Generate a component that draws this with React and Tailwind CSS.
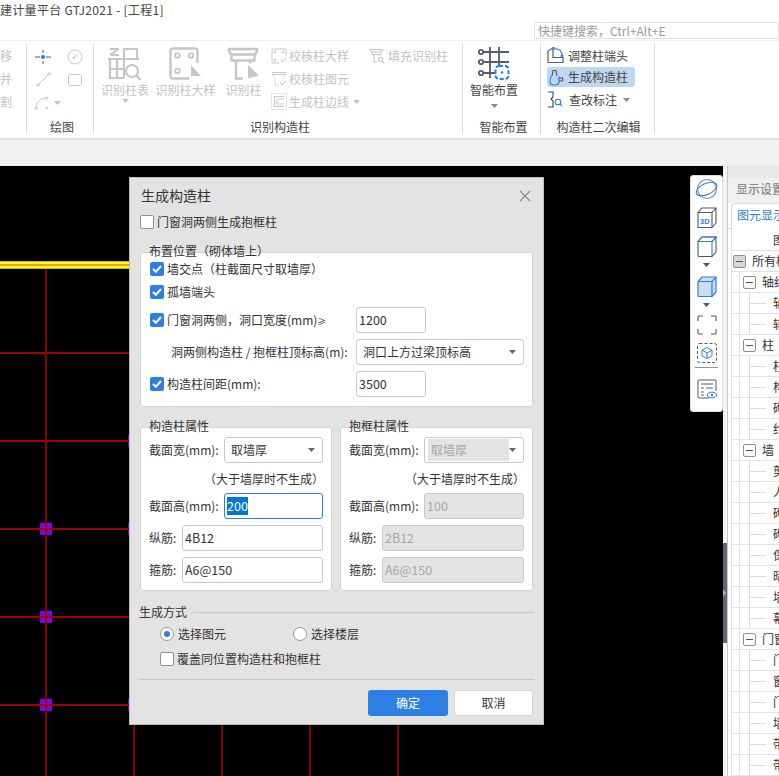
import React from "react";

const G = "#c6c6c6";

function Tri({ c = "#8a8a8a" }) {
  return (
    <svg width="7" height="4" viewBox="0 0 7 4" className="shrink-0">
      <path d="M0 0h7L3.5 4z" fill={c} />
    </svg>
  );
}

function IconTable() {
  return (
    <svg width="34" height="34" viewBox="0 0 34 34" fill="none" stroke={G} strokeWidth="2.2">
      <path d="M2 2h9M2 7.500l8-5M3 8h8" strokeWidth="1.800" />
      <path d="M0 12h31M16 1v30M16 2h13v10M2 12v19h14M9 12v19M2 22h14" />
      <circle cx="24" cy="24" r="6" />
      <path d="M28.500 28.500l4 4.500" />
    </svg>
  );
}
function IconDetail() {
  return (
    <svg width="33" height="34" viewBox="0 0 33 34" fill="none" stroke={G} strokeWidth="2.4">
      <path d="M20 31.500H4a2.500 2.500 0 0 1-2.500-2.500V4A2.500 2.500 0 0 1 4 1.500h22A2.500 2.500 0 0 1 28.500 4v12" />
      <circle cx="8.500" cy="8.500" r="2.300" strokeWidth="1.800" />
      <circle cx="22" cy="8.500" r="2.300" strokeWidth="1.800" />
      <circle cx="8.500" cy="24" r="2.300" strokeWidth="1.800" />
      <path d="M22 18l10 11H22z" fill={G} stroke="none" />
    </svg>
  );
}
function IconColumn() {
  return (
    <svg width="33" height="34" viewBox="0 0 33 34" fill="none" stroke={G} strokeWidth="2.4">
      <path d="M1 2h30M1 2l3 5.500h24L31 2M4.500 7.500v6h23v-6" />
      <path d="M9 13.500V31.500h7M23 13.500v3" />
      <path d="M21 18l11 10.500-11 3z" fill={G} stroke="none" />
    </svg>
  );
}
function IconSmallCheck() {
  return (
    <svg width="16" height="16" viewBox="0 0 16 16" fill="none" stroke={G} strokeWidth="1">
      <path d="M8 15H2a1 1 0 0 1-1-1V2a1 1 0 0 1 1-1h12a1 1 0 0 1 1 1v7" />
      <circle cx="4" cy="4" r="1" />
      <circle cx="12" cy="4" r="1" />
      <circle cx="4" cy="12" r="1" />
      <path d="M10 12l2 2 3-4" />
    </svg>
  );
}
function IconSmallTrap() {
  return (
    <svg width="16" height="16" viewBox="0 0 16 16" fill="none" stroke={G} strokeWidth="1">
      <path d="M1 1.500h14M1 3.500h14" />
      <path d="M2 4l2 4v6h4M14 4l-2 4" strokeDasharray="1.500 1" />
      <path d="M9 11l2 3 4-4" />
    </svg>
  );
}
function IconSmallEdge() {
  return (
    <svg width="16" height="17" viewBox="0 0 16 17" fill="none" stroke={G} strokeWidth="1">
      <rect x="0.500" y="0.500" width="15" height="16" strokeDasharray="1 1" />
      <path d="M3.500 3.500h10M3.500 3.500v10h10M6 6h7M6 6v5h7" />
    </svg>
  );
}
function IconSmallFill() {
  return (
    <svg width="16" height="16" viewBox="0 0 16 16" fill="none" stroke={G} strokeWidth="1.100">
      <path d="M1 1.500h13l-1.500 2.500h-10zM3 4v2.500h9V4M5 6.500V14h3M10 6.500V8" />
      <circle cx="11.500" cy="11.500" r="2.200" />
      <path d="M13 13l2 2" />
    </svg>
  );
}
function IconGrid() {
  return (
    <svg width="33" height="33" viewBox="0 0 33 33" fill="none">
      <g stroke="#555d68" strokeWidth="1.800">
        <path d="M5 5h26M5 15h26M5 26h13M12 0v31M21 0v22" />
        <circle cx="3" cy="5" r="2.200" fill="#fff" />
        <circle cx="3" cy="15" r="2.200" fill="#fff" />
        <circle cx="3" cy="26" r="2.200" fill="#fff" />
      </g>
      <rect x="17.500" y="19" width="13" height="13" rx="3.500" fill="#fff" stroke="#1f7fe8" strokeWidth="2" strokeDasharray="4 2" />
      <circle cx="24" cy="25.500" r="1.200" fill="#1f7fe8" />
    </svg>
  );
}
function IconAdjust() {
  return (
    <svg width="17" height="17" viewBox="0 0 17 17" fill="none" stroke="#555d68" strokeWidth="1.200">
      <path d="M1 15.500V4l5-3v9.500h10v5z" />
      <path d="M6 1l7 2 2.500 5" stroke="#2e7fe3" />
      <circle cx="6.500" cy="1.500" r="1" fill="#fff" stroke="#2e7fe3" />
      <circle cx="15" cy="9" r="1" fill="#fff" stroke="#2e7fe3" />
    </svg>
  );
}
function IconGen() {
  return (
    <svg width="15" height="17" viewBox="0 0 15 17" fill="none" stroke="#555d68" strokeWidth="1.200">
      <path d="M3 7l1-5.500h3L8 7" />
      <path d="M2.500 7C1 9 1 9.500 1 13c0 2 1.500 3 4.500 3S10 15 10 13V7.500" stroke="#1f7fe8" />
      <path d="M10 9h3.500v3H10" stroke="#555d68" />
    </svg>
  );
}
function IconAnn() {
  return (
    <svg width="16" height="17" viewBox="0 0 16 17" fill="none" stroke="#3e4650" strokeWidth="1.100">
      <path d="M1 1h5v5L4 8l2 2v6H1" />
      <circle cx="11" cy="11" r="2.800" stroke="#2e7fe3" />
      <path d="M13 13l2 2" stroke="#2e7fe3" />
    </svg>
  );
}

function Small({ icon, text, gap = "gap-[2px]", cls = "text-[#c2c2c2]", extra }) {
  return (
    <div className={`h-[23px] flex items-center ${gap} ${cls} whitespace-nowrap`}>
      {icon}
      <span>{text}</span>
      {extra}
    </div>
  );
}

function BigTool({ w, icon, text, arrow }) {
  return (
    <div className={`${w} flex flex-col items-center text-[#c2c2c2] whitespace-nowrap pt-[4px]`}>
      <div className="h-[34px]">{icon}</div>
      <div className="leading-[18px]">{text}</div>
      {arrow && <div className="flex"><Tri c="#c2c2c2" /></div>}
    </div>
  );
}

function Group({ w, label, children, cls = "", labelCls = "" }) {
  return (
    <div className={`${w} h-[91px] shrink-0 border-r border-[#dcdcdc] flex flex-col`}>
      <div className={`h-[76px] flex ${cls}`}>{children}</div>
      <div className={`h-[15px] leading-[15px] text-center text-[#444] whitespace-nowrap ${labelCls}`}>{label}</div>
    </div>
  );
}

function Ribbon() {
  return (
    <div className="h-[99px] shrink-0 flex pt-[2px] border-b-2 border-[#e2e2e2] bg-white text-[12px]">
      <Group w="w-[27px]" label="" cls="flex-col pt-[1px] text-[#c2c2c2]">
        <div className="h-[23px] leading-[23px]">移</div>
        <div className="h-[23px] leading-[23px]">并</div>
        <div className="h-[23px] leading-[23px]">割</div>
      </Group>
      <Group w="w-[67px]" label="绘图" cls="pt-[2px]" labelCls="pl-[4px]">
        <div className="grid grid-cols-[32px_32px] grid-rows-[23px_23px_23px] items-center justify-items-center">
          <svg width="16" height="14" viewBox="0 0 16 14" fill="none" stroke="#4f5864" strokeWidth="1">
            <path d="M0 7h5M11 7h5M8 0v3M8 11v3" />
            <circle cx="8" cy="7" r="2" fill="#1f7fe8" stroke="none" />
          </svg>
          <svg width="16" height="16" viewBox="0 0 16 16" fill="none" stroke={G} strokeWidth="1">
            <circle cx="8" cy="8" r="7" />
            <path d="M7 9l3.500-4" />
            <circle cx="7" cy="9" r="0.800" />
          </svg>
          <svg width="15" height="15" viewBox="0 0 15 15" fill="none" stroke={G} strokeWidth="1">
            <path d="M2.500 12.500l10-10" />
            <circle cx="2" cy="13" r="1.200" />
            <circle cx="13" cy="2" r="1.200" />
          </svg>
          <svg width="14" height="12" viewBox="0 0 14 12" fill="none" stroke={G} strokeWidth="1">
            <rect x="0.500" y="0.500" width="13" height="11" rx="1" />
          </svg>
          <div className="w-[32px] flex items-center gap-[4px] pl-[8px]">
            <svg width="15" height="14" viewBox="0 0 15 14" fill="none" stroke={G} strokeWidth="1" className="shrink-0">
              <path d="M1 13C1 6 5 2 11 2" />
              <circle cx="1.500" cy="12.500" r="1" />
              <circle cx="12" cy="2" r="1" />
              <circle cx="12" cy="12" r="1" />
            </svg>
            <Tri c="#c2c2c2" />
          </div>
        </div>
      </Group>
      <Group w="w-[369px]" label="识别构造柱" cls="pl-[1px]" labelCls="pl-[4px]">
        <BigTool w="w-[60px]" icon={<IconTable />} text="识别柱表" arrow />
        <BigTool w="w-[61px]" icon={<IconDetail />} text="识别柱大样" />
        <BigTool w="w-[55px]" icon={<IconColumn />} text="识别柱" />
        <div className="w-[98px] flex flex-col pt-[1px]">
          <Small icon={<IconSmallCheck />} text="校核柱大样" />
          <Small icon={<IconSmallTrap />} text="校核柱图元" />
          <Small icon={<IconSmallEdge />} text="生成柱边线" extra={<span className="ml-[2px] flex"><Tri c="#c2c2c2" /></span>} />
        </div>
        <div className="flex flex-col pt-[1px]">
          <Small icon={<IconSmallFill />} text="填充识别柱" gap="gap-[3px]" />
        </div>
      </Group>
      <Group w="w-[78px]" label="智能布置" cls="pl-[7px]" labelCls="pl-[4px]">
        <div className="w-[48px] flex flex-col items-center text-[#444] whitespace-nowrap pt-[4px]">
          <IconGrid />
          <div className="mt-[1px] leading-[18px]">智能布置</div>
          <div className="mt-[5px] flex"><Tri /></div>
        </div>
      </Group>
      <Group w="w-[114px]" label="构造柱二次编辑" cls="flex-col pl-[6px] pt-[1px]" labelCls="pl-[2px]">
        <Small icon={<IconAdjust />} text="调整柱端头" cls="text-[#444]" gap="gap-[4px]" />
        <div className="w-[88px] h-[20px] rounded-[3px] bg-[#bfd7f0] flex items-center gap-[4px] pl-[2px] text-[#444] whitespace-nowrap">
          <IconGen />
          <span>生成构造柱</span>
        </div>
        <div className="mt-[1px]">
          <Small icon={<IconAnn />} text="查改标注" cls="text-[#444]" gap="gap-[6px]" extra={<span className="flex"><Tri /></span>} />
        </div>
      </Group>
    </div>
  );
}

function CadDrawing() {
  const hs = [353, 441, 529, 617, 705].map((y) => y - 166);
  const vs = [46, 134, 222, 310, 398];
  const squares = [
    [46, 529], [46, 617], [46, 705], [134, 441], [134, 529], [134, 705],
  ];
  return (
    <svg className="absolute inset-0" width="723" height="610" viewBox="0 0 723 610">
      {squares.map(([x, y]) => (
        <rect key={`${x}-${y}`} x={x - 6} y={y - 166 - 6} width="12" height="12" fill="#7f00f5" />
      ))}
      {hs.map((y) => (
        <rect key={y} x="0" y={y - 1} width="400" height="2" fill="#a00000" />
      ))}
      {vs.map((x) => (
        <rect key={x} x={x - 1} y="99" width="2" height="511" fill="#880000" />
      ))}
      <rect x="0" y="95" width="400" height="8" fill="#b8b81a" />
      <rect x="0" y="96" width="400" height="6" fill="#ffff20" />
      <rect x="0" y="98" width="400" height="2" fill="#ff9a1a" />
    </svg>
  );
}

function FloatBar() {
  const s = "#4d5a6b";
  const b = "#2e7fe3";
  return (
    <div className="absolute left-[690px] top-[9px] w-[33px] h-[237px] bg-white border border-[#dcdcdc] rounded-[3px] flex flex-col items-center pt-[2px]">
      <svg width="23" height="22" viewBox="0 0 23 22" fill="none" strokeWidth="1.100">
        <circle cx="12" cy="11" r="9.500" stroke="#7a8a9c" />
        <ellipse cx="11.500" cy="11" rx="11" ry="5.500" transform="rotate(-25 11.500 11)" stroke={b} />
      </svg>
      <svg className="mt-[7px]" width="20" height="21" viewBox="0 0 20 21" fill="none" stroke={s} strokeWidth="1.100">
        <path d="M1 5.500L5 1h14v15l-4 4.500H1zM1 5.500h14v15M15 5.500L19 1" />
        <text x="3" y="17" fontSize="7.500" fontWeight="700" fill={b} stroke="none" fontFamily="Liberation Sans, sans-serif">3D</text>
      </svg>
      <svg className="mt-[8px]" width="20" height="21" viewBox="0 0 20 21" fill="none" stroke={s} strokeWidth="1.100">
        <path d="M1 5.500L5 1h14v15l-4 4.500H2a1 1 0 0 1-1-1zM15 5.500L19 1" />
        <path d="M1 5.500h14v15" stroke={b} />
        <path d="M1 5.500L5 1h14L15 5.500z" stroke={b} />
      </svg>
      <div className="mt-[6px] flex"><Tri c="#4d5a6b" /></div>
      <svg className="mt-[9px]" width="20" height="21" viewBox="0 0 20 21" fill="#c9ddf7" stroke={b} strokeWidth="1.200">
        <path d="M1 5.500L5 1h14v15l-4 4.500H2a1 1 0 0 1-1-1z" />
        <path d="M1 5.500h14v15M15 5.500L19 1" fill="none" />
      </svg>
      <div className="mt-[6px] flex"><Tri c="#4d5a6b" /></div>
      <svg className="mt-[8px]" width="20" height="20" viewBox="0 0 20 20" fill="none" stroke={s} strokeWidth="1.100">
        <path d="M1 6V2a1 1 0 0 1 1-1h4M14 1h4a1 1 0 0 1 1 1v4M19 14v4a1 1 0 0 1-1 1h-4M6 19H2a1 1 0 0 1-1-1v-4" />
      </svg>
      <svg className="mt-[8px]" width="20" height="20" viewBox="0 0 20 20" fill="none" stroke={s} strokeWidth="1">
        <rect x="0.500" y="0.500" width="19" height="19" rx="2" strokeDasharray="3 2" />
        <path d="M10 4.500l5 2.700v5.600l-5 2.700-5-2.700V7.200zM5 7.200l5 2.800 5-2.800M10 10v5.500" stroke={b} />
      </svg>
      <div className="mt-[4px] w-[23px] h-px bg-[#8d959f]" />
      <svg className="mt-[11px]" width="20" height="20" viewBox="0 0 20 20" fill="none" stroke={s} strokeWidth="1">
        <path d="M12 19H2a1 1 0 0 1-1-1V2a1 1 0 0 1 1-1h16a1 1 0 0 1 1 1v10" />
        <path d="M4 5h12M4 9h3M9 9h7M4 13h3M4 16h3" />
        <ellipse cx="15" cy="16" rx="4.500" ry="2.800" stroke={b} fill="#fff" />
        <circle cx="15" cy="16" r="1.200" fill={b} stroke="none" />
      </svg>
    </div>
  );
}

const TREE = [
  [0, "所有构件"], [1, "轴线"], [2, "轴网"], [2, "辅助轴线"], [1, "柱"], [2, "柱"], [2, "构造柱"], [2, "砌体柱"], [2, "约束边缘非阴影区"],
  [1, "墙"], [2, "剪力墙"], [2, "人防门框墙"], [2, "砌体墙"], [2, "砌体加筋"], [2, "保温墙"], [2, "暗梁"], [2, "墙垛"], [2, "幕墙"],
  [1, "门窗洞"], [2, "门"], [2, "窗"], [2, "门联窗"], [2, "墙洞"], [2, "带形窗"], [2, "带形洞"],
];

function MinusBox({ fill }) {
  return (
    <div className={`w-[13px] h-[13px] shrink-0 rounded-[2px] border border-[#8f8f8f] flex items-center justify-center ${fill ? "bg-[#d8d8d8]" : "bg-white"}`}>
      <div className="w-[7px] h-px bg-[#555]" />
    </div>
  );
}

function TreeRow({ level, text }) {
  return (
    <div className="h-[21px] shrink-0 flex items-center border-b border-[#e2e2e2] whitespace-nowrap text-[#333]">
      {level === 0 && (
        <>
          <div className="ml-[1px]"><MinusBox fill /></div>
          <span className="ml-[6px]">{text}</span>
        </>
      )}
      {level === 1 && (
        <>
          <div className="w-[8px] h-full border-r border-[#e2e2e2] shrink-0" />
          <div className="ml-[3px]"><MinusBox /></div>
          <span className="ml-[6px]">{text}</span>
        </>
      )}
      {level === 2 && (
        <>
          <div className="w-[8px] h-full border-r border-[#e2e2e2] shrink-0" />
          <div className="w-[10px] h-full border-r border-[#dcdcdc] shrink-0" />
          <div className="w-[16px] h-px bg-[#dcdcdc] shrink-0" />
          <span className="ml-[7px]">{text}</span>
        </>
      )}
    </div>
  );
}

function SidePanel() {
  return (
    <div className="w-[56px] shrink-0 flex bg-white text-[12px]">
      <div className="relative w-[4px] shrink-0 bg-[#f4f4f4]">
        <div className="absolute left-0 top-[377px] w-[4px] h-[100px] bg-[#5f6873] flex items-center">
          <div className="w-0 h-0 border-y-[4px] border-y-transparent border-l-[3px] border-l-[#aab0b6]" />
        </div>
      </div>
      <div className="w-px shrink-0 bg-[#c8c8c8]" />
      <div className="flex-1 min-w-0 overflow-hidden flex flex-col">
        <div className="h-[12px] shrink-0 bg-[#e8e8e8]" />
        <div className="h-[25px] shrink-0 bg-[#f0f0f0] pl-[8px] leading-[22px] text-[#8a8a8a] font-medium whitespace-nowrap">显示设置</div>
        <div className="h-[26px] shrink-0 pl-[3px] border-b border-[#dcdcdc] flex">
          <div className="w-[70px] h-[26px] shrink-0 rounded-t-[4px] border border-b-0 border-[#dcdcdc] bg-white pl-[5px] leading-[22px] text-[#2e7fe3] whitespace-nowrap">图元显示</div>
        </div>
        <div className="ml-[3px] flex-1 border-l border-[#e2e2e2] flex flex-col">
          <div className="h-[22px] shrink-0 pl-[41px] leading-[22px] border-b border-[#e2e2e2] text-[#333] whitespace-nowrap">图元</div>
          {TREE.map(([l, t], i) => (
            <TreeRow key={i} level={l} text={t} />
          ))}
        </div>
      </div>
    </div>
  );
}

function Check({ on }) {
  return (
    <div className={`w-[14px] h-[14px] shrink-0 rounded-[2px] flex items-center justify-center ${on ? "bg-[#2e7fe3]" : "bg-white border border-[#8f8f8f]"}`}>
      {on && (
        <svg width="10" height="8" viewBox="0 0 10 8" fill="none" stroke="#fff" strokeWidth="2">
          <path d="M1 4l2.800 2.800L9 1" />
        </svg>
      )}
    </div>
  );
}

function Radio({ on }) {
  return (
    <div className="w-[14px] h-[14px] shrink-0 rounded-full bg-white border border-[#9a9a9a] flex items-center justify-center">
      {on && <div className="w-[6px] h-[6px] rounded-full bg-[#2e7fe3]" />}
    </div>
  );
}

function Field({ w, value, disabled }) {
  return (
    <div className={`${w} h-[26px] shrink-0 rounded-[3px] border border-[#c8c8cc] pl-[2px] text-[12.5px] leading-[24px] ${disabled ? "bg-[#e3e3e3] text-[#a8a8a8]" : "bg-white text-[#333]"}`}>
      {value}
    </div>
  );
}

function Select({ w, value, disabled }) {
  return (
    <div className={`${w} h-[26px] shrink-0 rounded-[3px] border border-[#c8c8cc] bg-white flex items-center justify-between pr-[7px] ${disabled ? "pl-[3px] text-[#a8a8a8]" : "pl-[6px] text-[#333]"}`}>
      {disabled ? <div className="w-[81px] h-[22px] bg-[#e3e3e3] pl-[3px] leading-[22px]">{value}</div> : <span>{value}</span>}
      <Tri c="#666" />
    </div>
  );
}

function Box({ cls, legend, children }) {
  return (
    <div className={`relative rounded-[3px] border border-[#d4d4d4] bg-white ${cls}`}>
      <div className="absolute left-[8px] -top-[11px] leading-[18px] text-[#333] whitespace-nowrap">{legend}</div>
      {children}
    </div>
  );
}

function PropBox({ legend, cls, disabled, hintMl, fieldW, selectW, rebar }) {
  return (
    <Box cls={cls} legend={legend}>
      <div className="pt-[9px] pl-[8px] flex flex-col text-[#333]">
        <div className="flex items-center">
          <span className="w-[75px] whitespace-nowrap">截面宽(mm):</span>
          <Select w={selectW} value="取墙厚" disabled={disabled} />
        </div>
        <div className={`h-[30px] leading-[31px] whitespace-nowrap ${hintMl}`}>（大于墙厚时不生成）</div>
        <div className="flex items-center">
          <span className="w-[75px] whitespace-nowrap">截面高(mm):</span>
          {disabled ? (
            <Field w={selectW} value="100" disabled />
          ) : (
            <div className={`${selectW} h-[26px] shrink-0 rounded-[3px] border border-[#2e7fe3] bg-white pl-[2px] flex items-center text-[12.5px]`}>
              <span className="bg-[#0078d7] text-white leading-[18px]">200</span>
            </div>
          )}
        </div>
        <div className="mt-[6px] flex items-center">
          <span className="w-[33px] whitespace-nowrap">纵筋:</span>
          <Field w={fieldW} value={rebar} disabled={disabled} />
        </div>
        <div className="mt-[6px] flex items-center">
          <span className="w-[33px] whitespace-nowrap">箍筋:</span>
          <Field w={fieldW} value="A6@150" disabled={disabled} />
        </div>
      </div>
    </Box>
  );
}

function Dialog() {
  return (
    <div className="absolute left-[129px] top-[177px] w-[415px] h-[548px] bg-[#e3e3e3] border border-[#bdbdbd] px-[10px] text-[12px] text-[#333] shadow-sm">
      <div className="h-[35px] flex items-start justify-between pt-[7px] pl-[1px] pr-[2px]">
        <span className="text-[14px] leading-[20px]">生成构造柱</span>
        <svg className="mt-[5px]" width="12" height="12" viewBox="0 0 12 12" fill="none" stroke="#8a8a8a" strokeWidth="1.100">
          <path d="M1 1l10 10M11 1L1 11" />
        </svg>
      </div>
      <div className="h-[18px] flex items-center gap-[3px] whitespace-nowrap">
        <Check />
        <span>门窗洞两侧生成抱框柱</span>
      </div>
      <Box cls="mt-[21px] h-[155px]" legend="布置位置（砌体墙上）">
        <div className="pt-[6px] pl-[9px] flex flex-col">
          <div className="h-[20px] flex items-center gap-[3px] whitespace-nowrap">
            <Check on />
            <span>墙交点（柱截面尺寸取墙厚）</span>
          </div>
          <div className="mt-[3px] h-[20px] flex items-center gap-[3px] whitespace-nowrap">
            <Check on />
            <span>孤墙端头</span>
          </div>
          <div className="mt-[5px] flex items-center whitespace-nowrap">
            <Check on />
            <span className="ml-[3px] w-[189px]">门窗洞两侧，洞口宽度(mm)<span className="text-[9px]">≥</span></span>
            <Field w="w-[70px]" value="1200" />
          </div>
          <div className="mt-[6px] flex items-center whitespace-nowrap pl-[21px]">
            <span className="w-[185px]">洞两侧构造柱 / 抱框柱顶标高(m):</span>
            <Select w="w-[168px]" value="洞口上方过梁顶标高" />
          </div>
          <div className="mt-[6px] flex items-center whitespace-nowrap">
            <Check on />
            <span className="ml-[3px] w-[189px]">构造柱间距(mm):</span>
            <Field w="w-[70px]" value="3500" />
          </div>
        </div>
      </Box>
      <div className="mt-[20px] flex gap-[8px]">
        <PropBox legend="构造柱属性" cls="w-[192px] h-[164px]" hintMl="ml-[55px]" selectW="w-[99px]" fieldW="w-[141px]" rebar="4B12" />
        <PropBox legend="抱框柱属性" cls="w-[193px] h-[164px]" disabled hintMl="ml-[56px]" selectW="w-[100px]" fieldW="w-[142px]" rebar="2B12" />
      </div>
      <div className="mt-[13px] -mx-px h-[16px] flex items-center gap-[6px] whitespace-nowrap">
        <span>生成方式</span>
        <div className="flex-1 h-px bg-[#c8c8c8]" />
      </div>
      <div className="mt-[4px] h-[20px] pl-[20px] flex items-center whitespace-nowrap">
        <div className="w-[133px] flex items-center gap-[4px]">
          <Radio on />
          <span>选择图元</span>
        </div>
        <div className="flex items-center gap-[4px]">
          <Radio />
          <span>选择楼层</span>
        </div>
      </div>
      <div className="mt-[5px] h-[20px] pl-[20px] flex items-center gap-[3px] whitespace-nowrap">
        <Check />
        <span>覆盖同位置构造柱和抱框柱</span>
      </div>
      <div className="mt-[10px] -mx-px h-px bg-[#c8c8c8]" />
      <div className="mt-[10px] flex justify-end gap-[6px]">
        <div className="w-[80px] h-[26px] rounded-[3px] bg-[#2e7fe3] text-white text-center leading-[26px]">确定</div>
        <div className="w-[79px] h-[26px] rounded-[3px] bg-white border border-[#d4d4d4] text-center leading-[24px]">取消</div>
      </div>
    </div>
  );
}

export default function App() {
  return (
    <div className="relative w-[779px] h-[776px] overflow-hidden flex flex-col bg-white font-['Noto_Sans_CJK_SC','Noto_Sans',sans-serif]">
      <div className="h-[41px] shrink-0 relative border-b border-[#eeeeee] bg-white flex items-start justify-between">
        <div className="text-[12px] tracking-[0.3px] leading-[20px] text-[#444] whitespace-nowrap">建计量平台 GTJ2021 - [工程1]</div>
        <div className="mt-[22px] w-[245px] h-[17px] border border-[#e2e2e2] pl-[3px] text-[12px] leading-[15px] text-[#9a9a9a] whitespace-nowrap">快捷键搜索，Ctrl+Alt+E</div>
      </div>
      <Ribbon />
      <div className="h-[26px] shrink-0 bg-[#f1f1f1]" />
      <div className="flex-1 min-h-0 flex">
        <div className="relative flex-1 bg-black overflow-hidden">
          <CadDrawing />
          <FloatBar />
        </div>
        <SidePanel />
      </div>
      <Dialog />
    </div>
  );
}
